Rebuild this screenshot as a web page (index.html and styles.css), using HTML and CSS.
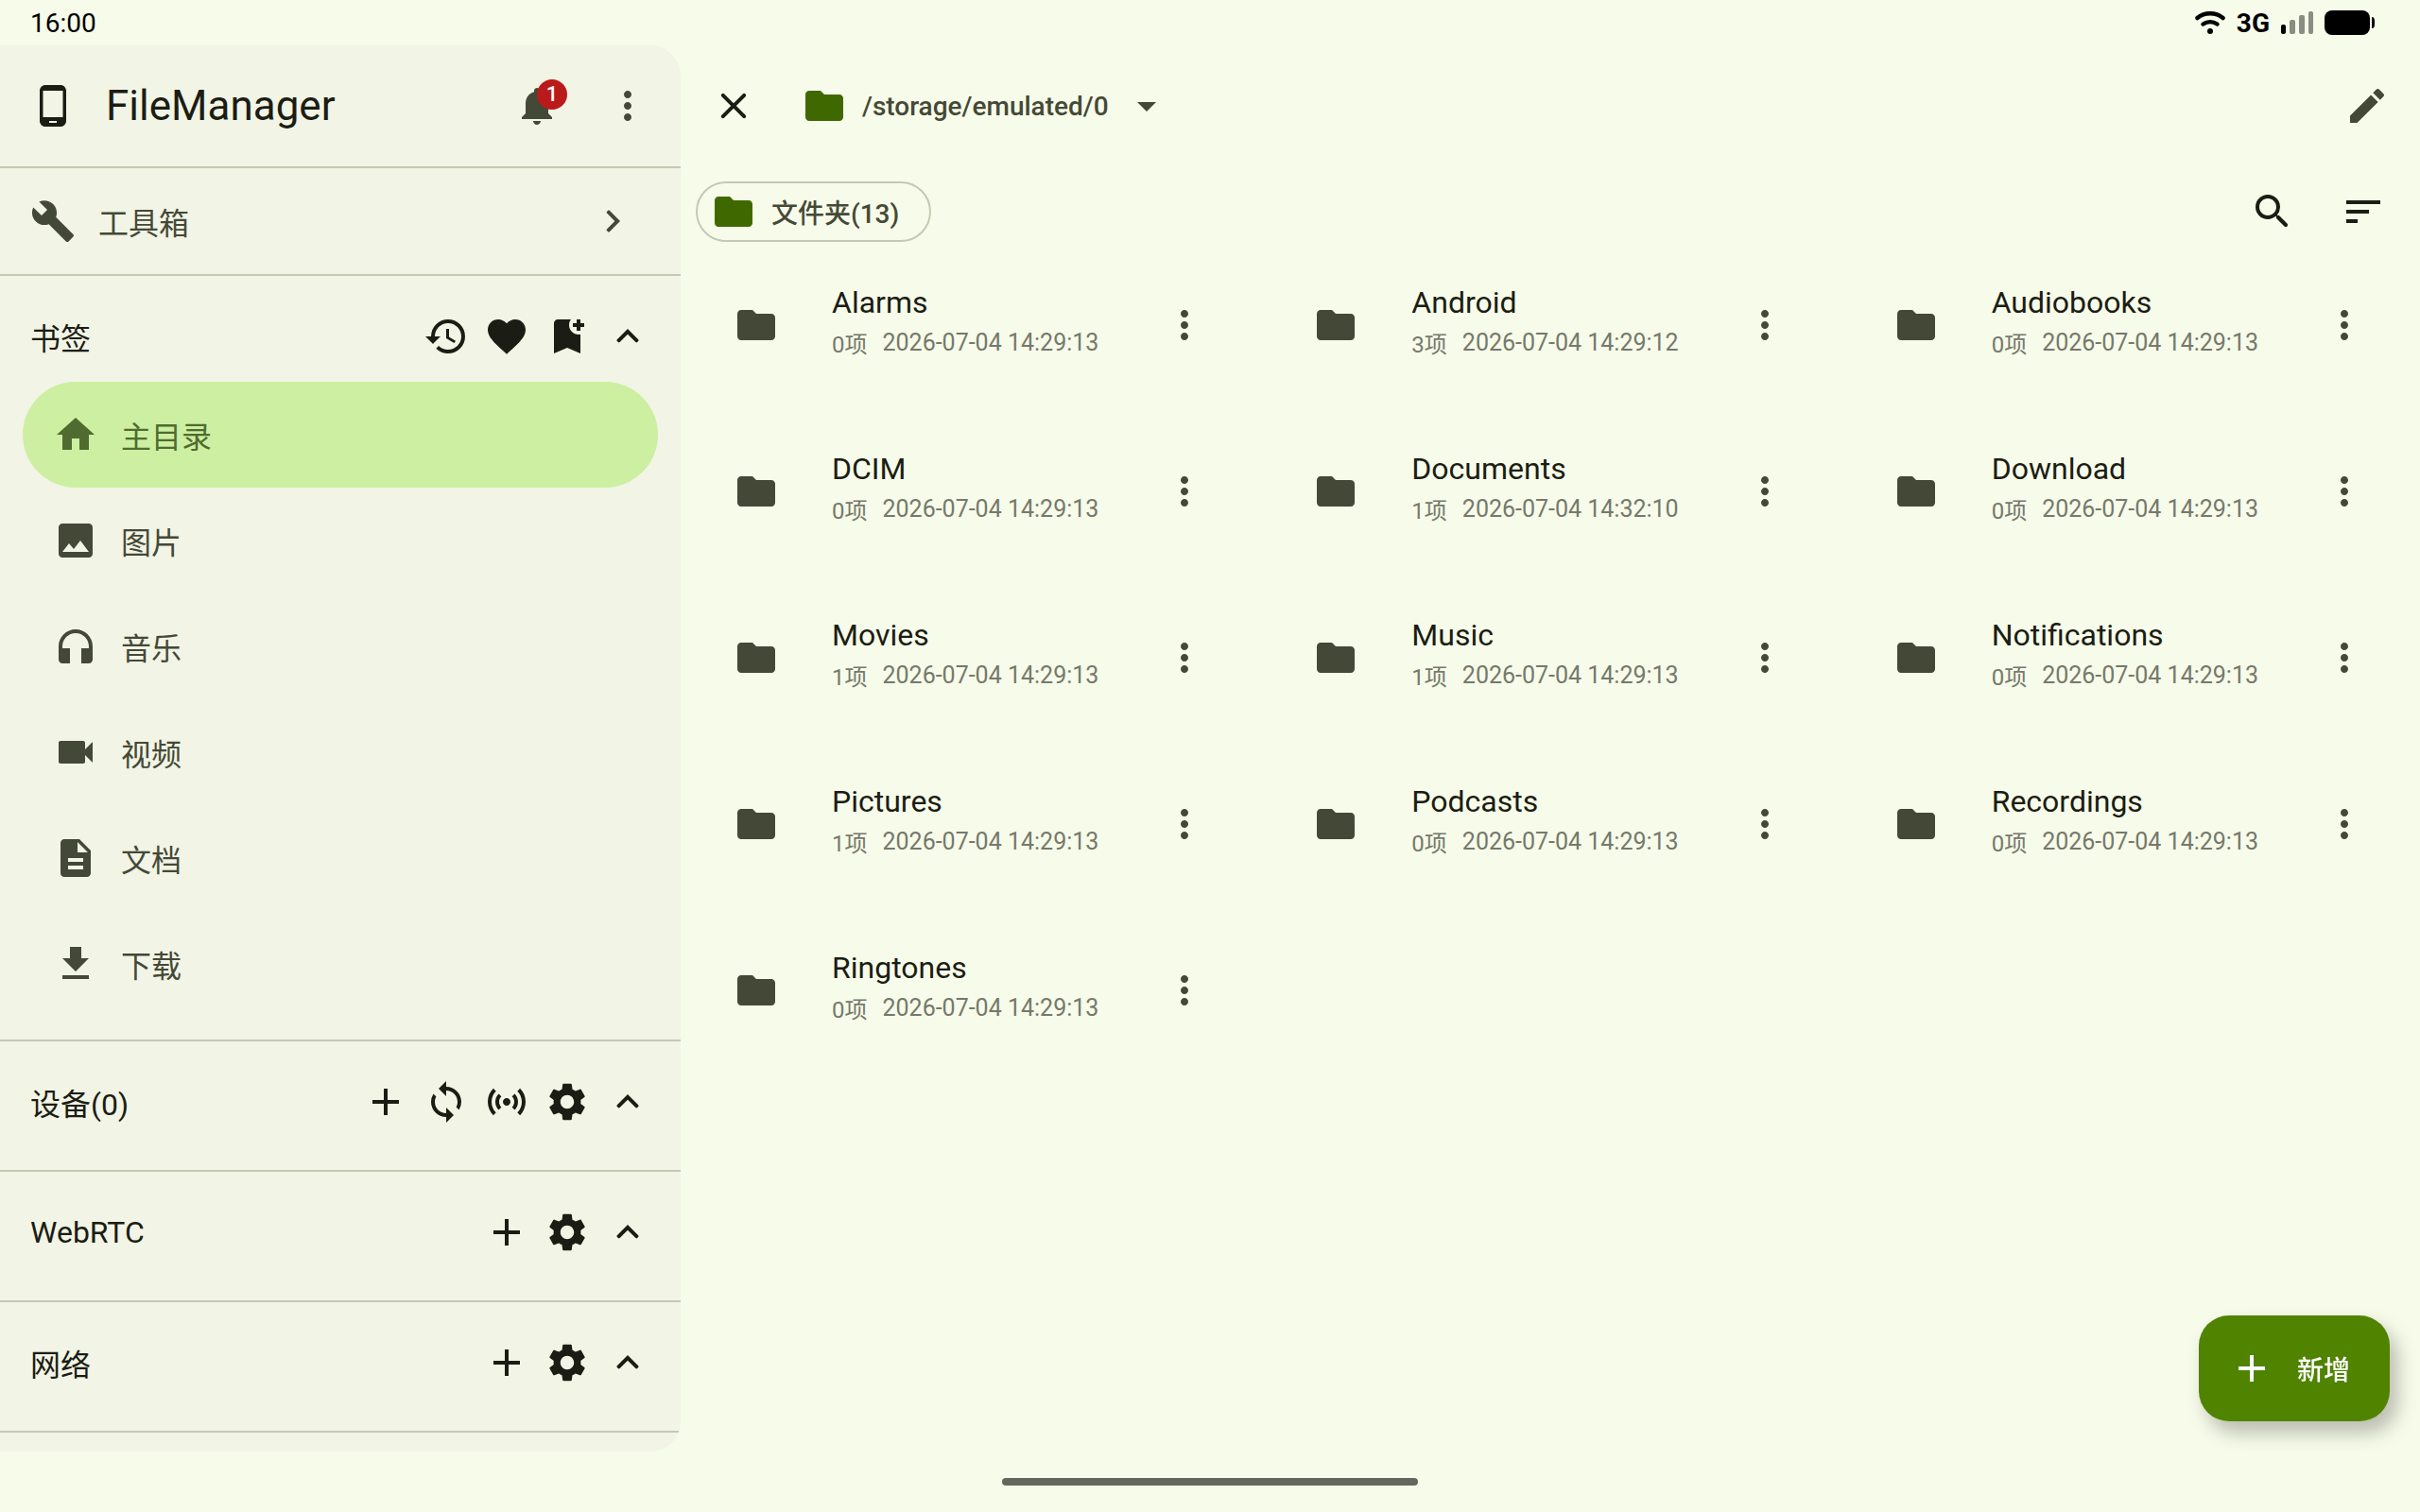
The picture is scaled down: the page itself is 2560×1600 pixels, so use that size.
FILE: index.html
```html
<!DOCTYPE html>
<html lang="zh-CN">
<head>
    <meta charset="UTF-8">
    <meta name="viewport" content="width=device-width, initial-scale=1.0">
    <title>FileManager</title>
    <link rel="stylesheet" href="styles.css">
</head>
<body>
    <!-- Icon set -->
    <svg class="sprite" aria-hidden="true">
        <symbol id="i-phone" viewBox="0 0 24 24"><path d="M16 1H8C6.34 1 5 2.34 5 4v16c0 1.66 1.34 3 3 3h8c1.66 0 3-1.34 3-3V4c0-1.66-1.34-3-3-3zm-2 20h-4v-1h4v1zm3.25-3H6.75V4h10.5v14z"/></symbol>
        <symbol id="i-bell" viewBox="0 0 24 24"><path d="M12 22c1.1 0 2-.9 2-2h-4c0 1.1.89 2 2 2zm6-6v-5c0-3.07-1.64-5.64-4.5-6.32V4c0-.83-.67-1.5-1.5-1.5s-1.5.67-1.5 1.5v.68C7.63 5.36 6 7.92 6 11v5l-2 2v1h16v-1l-2-2z"/></symbol>
        <symbol id="i-more" viewBox="0 0 24 24"><path d="M12 8c1.1 0 2-.9 2-2s-.9-2-2-2-2 .9-2 2 .9 2 2 2zm0 2c-1.1 0-2 .9-2 2s.9 2 2 2 2-.9 2-2-.9-2-2-2zm0 6c-1.1 0-2 .9-2 2s.9 2 2 2 2-.9 2-2-.9-2-2-2z"/></symbol>
        <symbol id="i-wrench" viewBox="0 0 24 24"><path d="M22.7 19l-9.1-9.1c.9-2.3.4-5-1.5-6.9-2-2-5-2.4-7.4-1.3L9 6 6 9 1.6 4.7C.4 7.1.9 10.1 2.9 12.1c1.9 1.9 4.6 2.4 6.9 1.5l9.1 9.1c.4.4 1 .4 1.4 0l2.3-2.3c.5-.4.5-1.1.1-1.4z"/></symbol>
        <symbol id="i-right" viewBox="0 0 24 24"><path d="M16 12l-5.6-5.6c-.25-.25-.6-.25-.85 0L9 6.95c-.25.25-.25.6 0 .85L13.17 12 9 16.2c-.25.25-.25.6 0 .85l.55.55c.25.25.6.25.85 0L16 12z"/></symbol>
        <symbol id="i-up" viewBox="0 0 24 24"><path d="M12 8l-5.6 5.6c-.25.25-.25.6 0 .85l.55.55c.25.25.6.25.85 0L12 10.83 16.2 15c.25.25.6.25.85 0l.55-.55c.25-.25.25-.6 0-.85L12 8z"/></symbol>
        <symbol id="i-history" viewBox="0 0 24 24"><path d="M13 3a9 9 0 0 0-9 9H1l3.89 3.89.07.14L9 12H6c0-3.87 3.13-7 7-7s7 3.13 7 7-3.13 7-7 7c-1.93 0-3.68-.79-4.94-2.06l-1.42 1.42A8.954 8.954 0 0 0 13 21a9 9 0 0 0 0-18zm-1 5v5l4.28 2.54.72-1.21-3.5-2.08V8H12z"/></symbol>
        <symbol id="i-heart" viewBox="0 0 24 24"><path d="M12 21.35l-1.45-1.32C5.4 15.36 2 12.28 2 8.5 2 5.42 4.42 3 7.5 3c1.74 0 3.41.81 4.5 2.09C13.09 3.81 14.76 3 16.5 3 19.58 3 22 5.42 22 8.5c0 3.78-3.4 6.86-8.55 11.54L12 21.35z"/></symbol>
        <symbol id="i-bookmark-add" viewBox="0 0 24 24"><path d="M21 7h-2v2h-2V7h-2V5h2V3h2v2h2v2zm-2 14l-7-3-7 3V5c0-1.1.9-2 2-2h7c-.63.84-1 1.87-1 3 0 2.76 2.24 5 5 5 .34 0 .68-.03 1-.1V21z"/></symbol>
        <symbol id="i-home" viewBox="0 0 24 24"><path d="M10 20v-6h4v6h5v-8h3L12 3 2 12h3v8z"/></symbol>
        <symbol id="i-image" viewBox="0 0 24 24"><path d="M21 19V5c0-1.1-.9-2-2-2H5c-1.1 0-2 .9-2 2v14c0 1.1.9 2 2 2h14c1.1 0 2-.9 2-2zM8.5 13.5l2.5 3.01L14.5 12l4.5 6H5l3.5-4.5z"/></symbol>
        <symbol id="i-headset" viewBox="0 0 24 24"><path d="M12 3c-4.97 0-9 4.03-9 9v7c0 1.1.9 2 2 2h4v-8H5v-1c0-3.87 3.13-7 7-7s7 3.13 7 7v1h-4v8h4c1.1 0 2-.9 2-2v-7c0-4.97-4.03-9-9-9z"/></symbol>
        <symbol id="i-video" viewBox="0 0 24 24"><path d="M17 10.5V7c0-.55-.45-1-1-1H4c-.55 0-1 .45-1 1v10c0 .55.45 1 1 1h12c.55 0 1-.45 1-1v-3.5l4 4v-11l-4 4z"/></symbol>
        <symbol id="i-doc" viewBox="0 0 24 24"><path d="M14 2H6c-1.1 0-1.99.9-1.99 2L4 20c0 1.1.89 2 1.99 2H18c1.1 0 2-.9 2-2V8l-6-6zm2 16H8v-2h8v2zm0-4H8v-2h8v2zm-3-5V3.5L18.5 9H13z"/></symbol>
        <symbol id="i-download" viewBox="0 0 24 24"><path d="M19 9h-4V3H9v6H5l7 7 7-7zM5 18v2h14v-2H5z"/></symbol>
        <symbol id="i-add" viewBox="0 0 24 24"><path d="M19 13h-6v6h-2v-6H5v-2h6V5h2v6h6v2z"/></symbol>
        <symbol id="i-sync" viewBox="0 0 24 24"><path d="M12 4V1L8 5l4 4V6c3.31 0 6 2.69 6 6 0 1.01-.25 1.97-.7 2.8l1.46 1.46A7.93 7.93 0 0 0 20 12c0-4.42-3.58-8-8-8zm0 14c-3.31 0-6-2.69-6-6 0-1.01.25-1.97.7-2.8L5.24 7.74A7.93 7.93 0 0 0 4 12c0 4.42 3.58 8 8 8v3l4-4-4-4v3z"/></symbol>
        <symbol id="i-sensors" viewBox="0 0 24 24"><path d="M7.76 16.24C6.67 15.16 6 13.66 6 12s.67-3.16 1.76-4.24l1.42 1.42C8.45 9.9 8 10.9 8 12c0 1.1.45 2.1 1.17 2.83l-1.41 1.41zm8.48 0C17.33 15.16 18 13.66 18 12s-.67-3.16-1.76-4.24l-1.42 1.42C15.55 9.9 16 10.9 16 12c0 1.1-.45 2.1-1.17 2.83l1.41 1.41zM12 10c-1.1 0-2 .9-2 2s.9 2 2 2 2-.9 2-2-.9-2-2-2zm8 2c0 2.21-.9 4.21-2.35 5.65l1.42 1.42C20.88 17.26 22 14.76 22 12s-1.12-5.26-2.93-7.07l-1.42 1.42C19.1 7.79 20 9.79 20 12zM6.35 6.35L4.93 4.93C3.12 6.74 2 9.24 2 12s1.12 5.26 2.93 7.07l1.42-1.42C4.9 16.21 4 14.21 4 12s.9-4.21 2.35-5.65z"/></symbol>
        <symbol id="i-settings" viewBox="0 0 24 24"><path d="M19.14 12.94c.04-.3.06-.61.06-.94 0-.32-.02-.64-.07-.94l2.03-1.58c.18-.14.23-.41.12-.61l-1.92-3.32c-.12-.22-.37-.29-.59-.22l-2.39.96c-.5-.38-1.03-.7-1.62-.94l-.36-2.54c-.04-.24-.24-.41-.48-.41h-3.84c-.24 0-.43.17-.47.41l-.36 2.54c-.59.24-1.13.57-1.62.94l-2.39-.96c-.22-.08-.47 0-.59.22L2.74 8.87c-.12.21-.08.47.12.61l2.03 1.58c-.05.3-.09.63-.09.94s.02.64.07.94l-2.03 1.58c-.18.14-.23.41-.12.61l1.92 3.32c.12.22.37.29.59.22l2.39-.96c.5.38 1.03.7 1.62.94l.36 2.54c.05.24.24.41.48.41h3.84c.24 0 .44-.17.47-.41l.36-2.54c.59-.24 1.13-.56 1.62-.94l2.39.96c.22.08.47 0 .59-.22l1.92-3.32c.12-.22.07-.47-.12-.61l-2.01-1.58zM12 15.6c-1.98 0-3.6-1.62-3.6-3.6s1.62-3.6 3.6-3.6 3.6 1.62 3.6 3.6-1.62 3.6-3.6 3.6z"/></symbol>
        <symbol id="i-close" viewBox="0 0 24 24"><path d="M18.3 5.71c-.39-.39-1.02-.39-1.41 0L12 10.59 7.11 5.7c-.39-.39-1.02-.39-1.41 0-.39.39-.39 1.02 0 1.41L10.59 12 5.7 16.89c-.39.39-.39 1.02 0 1.41.39.39 1.02.39 1.41 0L12 13.41l4.89 4.89c.39.39 1.02.39 1.41 0 .39-.39.39-1.02 0-1.41L13.41 12l4.89-4.89c.38-.38.38-1.02 0-1.4z"/></symbol>
        <symbol id="i-folder" viewBox="0 0 24 24"><path d="M10 4H4c-1.1 0-1.99.9-1.99 2L2 18c0 1.1.9 2 2 2h16c1.1 0 2-.9 2-2V8c0-1.1-.9-2-2-2h-8l-2-2z"/></symbol>
        <symbol id="i-drop" viewBox="0 0 24 24"><path d="M7 10l5 5 5-5z"/></symbol>
        <symbol id="i-edit" viewBox="0 0 24 24"><path d="M3 17.25V21h3.75L17.81 9.94l-3.75-3.75L3 17.25zM20.71 7.04c.39-.39.39-1.02 0-1.41l-2.34-2.34c-.39-.39-1.02-.39-1.41 0l-1.83 1.83 3.75 3.75 1.83-1.83z"/></symbol>
        <symbol id="i-search" viewBox="0 0 24 24"><path d="M15.5 14h-.79l-.28-.27A6.471 6.471 0 0 0 16 9.5 6.5 6.5 0 1 0 9.5 16c1.61 0 3.09-.59 4.23-1.57l.27.28v.79l4.25 4.25c.41.41 1.08.41 1.49 0 .41-.41.41-1.08 0-1.49L15.5 14zm-6 0C7.01 14 5 11.99 5 9.5S7.01 5 9.5 5 14 7.01 14 9.5 11.99 14 9.5 14z"/></symbol>
        <symbol id="i-sort" viewBox="0 0 24 24"><path d="M3 18h6v-2H3v2zM3 6v2h18V6H3zm0 7h12v-2H3v2z"/></symbol>
    </svg>

    <!-- Status bar -->
    <div class="status-bar">
        <span class="clock">16:00</span>
        <div class="status-icons">
            <svg class="wifi" viewBox="0 0 32 24" fill="none" stroke="#000" stroke-linecap="round">
                <path d="M2.5 7C10 .8 22 .8 29.5 7" stroke-width="4.5"/>
                <path d="M8.5 13.5c4.5-3 10.500-3 15 0" stroke-width="4.5"/>
                <circle cx="16" cy="21" r="3" fill="#000" stroke="none"/>
            </svg>
            <span class="network">3G</span>
            <svg class="signal" viewBox="0 0 34 24">
                <rect x="0" y="14" width="5" height="10" rx="2"/>
                <g fill="#8a8d82">
                    <rect x="9" y="9" width="6" height="15" rx="2"/>
                    <rect x="19" y="4" width="6" height="20" rx="2"/>
                    <rect x="29" y="0" width="5" height="24" rx="2"/>
                </g>
            </svg>
            <svg class="battery" viewBox="0 0 53 26">
                <rect width="48" height="26" rx="8"/>
                <path d="M50 7c3 0 3 3 3 6s0 6-3 6z"/>
            </svg>
        </div>
    </div>

    <div class="app">
        <aside class="sidebar">
            <header class="sidebar-header">
                <svg class="icon"><use href="#i-phone"/></svg>
                <h1>FileManager</h1>
                <button class="icon-btn" aria-label="通知">
                    <svg class="icon"><use href="#i-bell"/></svg>
                    <span class="badge">1</span>
                </button>
                <button class="icon-btn" aria-label="更多"><svg class="icon"><use href="#i-more"/></svg></button>
            </header>

            <a class="toolbox" href="#">
                <svg class="icon"><use href="#i-wrench"/></svg>
                <span class="toolbox-label">工具箱</span>
                <svg class="icon"><use href="#i-right"/></svg>
            </a>

            <section class="group">
                <div class="group-header">
                    <h2>书签</h2>
                    <button aria-label="历史"><svg class="icon"><use href="#i-history"/></svg></button>
                    <button aria-label="收藏"><svg class="icon"><use href="#i-heart"/></svg></button>
                    <button aria-label="添加书签"><svg class="icon"><use href="#i-bookmark-add"/></svg></button>
                    <button aria-label="收起"><svg class="icon"><use href="#i-up"/></svg></button>
                </div>
                <nav class="bookmarks">
                    <a class="bookmark active" href="#"><svg class="icon"><use href="#i-home"/></svg>主目录</a>
                    <a class="bookmark" href="#"><svg class="icon"><use href="#i-image"/></svg>图片</a>
                    <a class="bookmark" href="#"><svg class="icon"><use href="#i-headset"/></svg>音乐</a>
                    <a class="bookmark" href="#"><svg class="icon"><use href="#i-video"/></svg>视频</a>
                    <a class="bookmark" href="#"><svg class="icon"><use href="#i-doc"/></svg>文档</a>
                    <a class="bookmark" href="#"><svg class="icon"><use href="#i-download"/></svg>下载</a>
                </nav>
            </section>

            <section class="group">
                <div class="group-header">
                    <h2>设备(0)</h2>
                    <button aria-label="添加"><svg class="icon"><use href="#i-add"/></svg></button>
                    <button aria-label="刷新"><svg class="icon"><use href="#i-sync"/></svg></button>
                    <button aria-label="广播"><svg class="icon"><use href="#i-sensors"/></svg></button>
                    <button aria-label="设置"><svg class="icon"><use href="#i-settings"/></svg></button>
                    <button aria-label="收起"><svg class="icon"><use href="#i-up"/></svg></button>
                </div>
            </section>

            <section class="group">
                <div class="group-header">
                    <h2>WebRTC</h2>
                    <button aria-label="添加"><svg class="icon"><use href="#i-add"/></svg></button>
                    <button aria-label="设置"><svg class="icon"><use href="#i-settings"/></svg></button>
                    <button aria-label="收起"><svg class="icon"><use href="#i-up"/></svg></button>
                </div>
            </section>

            <section class="group">
                <div class="group-header">
                    <h2>网络</h2>
                    <button aria-label="添加"><svg class="icon"><use href="#i-add"/></svg></button>
                    <button aria-label="设置"><svg class="icon"><use href="#i-settings"/></svg></button>
                    <button aria-label="收起"><svg class="icon"><use href="#i-up"/></svg></button>
                </div>
            </section>
        </aside>

        <main class="content">
            <div class="path-bar">
                <button aria-label="关闭"><svg class="icon"><use href="#i-close"/></svg></button>
                <button class="path">
                    <svg class="icon folder"><use href="#i-folder"/></svg>
                    /storage/emulated/0
                    <svg class="icon"><use href="#i-drop"/></svg>
                </button>
                <button class="edit" aria-label="编辑"><svg class="icon"><use href="#i-edit"/></svg></button>
            </div>

            <div class="filter-bar">
                <button class="chip"><svg class="icon folder"><use href="#i-folder"/></svg>文件夹(13)</button>
                <button class="search" aria-label="搜索"><svg class="icon"><use href="#i-search"/></svg></button>
                <button aria-label="排序"><svg class="icon"><use href="#i-sort"/></svg></button>
            </div>

            <div class="files" id="files"></div>
        </main>
    </div>

    <button class="fab"><svg class="icon"><use href="#i-add"/></svg>新增</button>

    <div class="nav-bar"><div class="nav-handle"></div></div>

    <script>
        const files = [
            ['Alarms', 0, '2026-07-04 14:29:13'],
            ['Android', 3, '2026-07-04 14:29:12'],
            ['Audiobooks', 0, '2026-07-04 14:29:13'],
            ['DCIM', 0, '2026-07-04 14:29:13'],
            ['Documents', 1, '2026-07-04 14:32:10'],
            ['Download', 0, '2026-07-04 14:29:13'],
            ['Movies', 1, '2026-07-04 14:29:13'],
            ['Music', 1, '2026-07-04 14:29:13'],
            ['Notifications', 0, '2026-07-04 14:29:13'],
            ['Pictures', 1, '2026-07-04 14:29:13'],
            ['Podcasts', 0, '2026-07-04 14:29:13'],
            ['Recordings', 0, '2026-07-04 14:29:13'],
            ['Ringtones', 0, '2026-07-04 14:29:13']
        ];

        document.getElementById('files').innerHTML = files.map(([name, count, date]) => `
            <div class="file">
                <svg class="icon"><use href="#i-folder"/></svg>
                <div class="file-info">
                    <div class="file-name">${name}</div>
                    <div class="file-meta"><span class="count">${count}项</span><time>${date}</time></div>
                </div>
                <button aria-label="${name} 更多"><svg class="icon"><use href="#i-more"/></svg></button>
            </div>
        `).join('');
    </script>
</body>
</html>
```
FILE: styles.css
```css
* {
    box-sizing: border-box;
}

body {
    margin: 0;
    min-height: 100vh;
    display: flex;
    flex-direction: column;
    background: #f7fbe9;
    color: #1b1d14;
    font-family: Roboto, "Noto Sans CJK SC", sans-serif;
    font-size: 32px;
}

h1,
h2 {
    margin: 0;
    font-weight: 400;
}

a {
    color: inherit;
    text-decoration: none;
}

button {
    display: flex;
    align-items: center;
    justify-content: center;
    padding: 0;
    border: none;
    background: none;
    color: inherit;
    font: inherit;
    cursor: pointer;
}

.sprite {
    display: none;
}

.icon {
    flex: none;
    width: 48px;
    height: 48px;
    fill: currentColor;
}

/* Status bar */
.status-bar {
    height: 48px;
    padding: 0 48px 0 32px;
    display: flex;
    align-items: center;
    justify-content: space-between;
    color: #000;
    font-size: 28px;
}

.status-icons {
    display: flex;
    align-items: center;
    gap: 12px;
}

.network {
    font-weight: 700;
}

.wifi {
    width: 32px;
    height: 24px;
}

.signal {
    width: 34px;
    height: 24px;
}

.battery {
    width: 53px;
    height: 26px;
}

.app {
    flex: 1;
    display: flex;
}

/* Sidebar */
.sidebar {
    flex: none;
    width: 720px;
    background: #f2f4e5;
    border-radius: 0 32px 32px 0;
    overflow: hidden;
}

.sidebar-header {
    height: 130px;
    padding: 0 8px 0 32px;
    display: flex;
    align-items: center;
    border-bottom: 2px solid #c4c9b3;
}

.sidebar-header h1 {
    flex: 1;
    margin-left: 32px;
    font-size: 44px;
}

.icon-btn {
    position: relative;
    width: 96px;
    height: 96px;
    color: #444937;
}

.badge {
    position: absolute;
    top: 20px;
    left: 48px;
    width: 32px;
    height: 32px;
    border-radius: 16px;
    background: #ba1a1a;
    color: #fff;
    font-size: 22px;
    font-weight: 500;
    line-height: 32px;
}

.toolbox {
    height: 114px;
    padding: 0 48px 0 32px;
    display: flex;
    align-items: center;
    gap: 24px;
    border-bottom: 2px solid #c4c9b3;
    color: #444937;
}

.toolbox-label {
    flex: 1;
}

.group {
    padding: 16px 0 24px;
    border-bottom: 2px solid #c4c9b3;
}

.group-header {
    height: 96px;
    padding: 0 32px;
    display: flex;
    align-items: center;
    gap: 16px;
}

.group-header h2 {
    flex: 1;
    font-size: 32px;
}

.bookmarks {
    padding: 0 24px;
}

.bookmark {
    height: 112px;
    padding: 0 32px;
    display: flex;
    align-items: center;
    gap: 24px;
    border-radius: 56px;
    color: #444937;
}

.bookmark.active {
    background: #ccefa1;
    color: #506b2f;
}

/* Content */
.content {
    flex: 1;
}

.path-bar {
    height: 128px;
    padding: 0 32px;
    display: flex;
    align-items: center;
    gap: 48px;
}

.path {
    gap: 16px;
    color: #444937;
    font-size: 28px;
    font-weight: 500;
}

.folder {
    color: #3f6900;
}

.edit {
    margin-left: auto;
    color: #444937;
}

.filter-bar {
    height: 96px;
    padding: 0 36px 0 16px;
    display: flex;
    align-items: center;
    gap: 48px;
}

.chip {
    height: 64px;
    padding: 0 32px 0 14px;
    gap: 16px;
    border: 2px solid #c4c9b3;
    border-radius: 32px;
    color: #444937;
    font-size: 28px;
    font-weight: 500;
}

.search {
    margin-left: auto;
}

.files {
    display: grid;
    grid-template-columns: repeat(3, 1fr);
    row-gap: 32px;
}

.file {
    height: 144px;
    padding: 0 56px;
    display: flex;
    align-items: center;
    gap: 56px;
    color: #444937;
}

.file-info {
    flex: 1;
    padding-bottom: 12px;
}

.file-name {
    color: #1b1d14;
    line-height: 48px;
}

.file-meta {
    height: 36px;
    display: flex;
    align-items: center;
    gap: 16px;
    color: #75796c;
    font-size: 25px;
}

.count {
    font-size: 24px;
}

/* Add button */
.fab {
    position: fixed;
    right: 32px;
    bottom: 96px;
    height: 112px;
    padding: 0 42px 0 32px;
    gap: 24px;
    border-radius: 32px;
    background: #4f8300;
    color: #fff;
    font-size: 28px;
    font-weight: 500;
    box-shadow: 8px 12px 20px rgba(0, 0, 0, 0.25);
}

.nav-bar {
    height: 64px;
    display: flex;
    align-items: center;
    justify-content: center;
}

.nav-handle {
    width: 440px;
    height: 8px;
    border-radius: 4px;
    background: #65675f;
}
```
